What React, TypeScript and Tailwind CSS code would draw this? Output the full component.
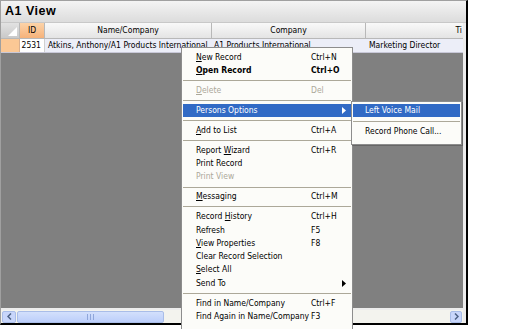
import React from "react";

type Item =
  | { sep: true }
  | { label: string; u?: number; key?: string; bold?: boolean; off?: boolean; sub?: boolean; hot?: boolean };

const menu: Item[] = [
  { label: "New Record", u: 0, key: "Ctrl+N" },
  { label: "Open Record", u: 0, key: "Ctrl+O", bold: true },
  { sep: true },
  { label: "Delete", u: 0, key: "Del", off: true },
  { sep: true },
  { label: "Persons Options", sub: true, hot: true },
  { sep: true },
  { label: "Add to List", u: 0, key: "Ctrl+A" },
  { sep: true },
  { label: "Report Wizard", u: 7, key: "Ctrl+R" },
  { label: "Print Record" },
  { label: "Print View", off: true },
  { sep: true },
  { label: "Messaging", u: 0, key: "Ctrl+M" },
  { sep: true },
  { label: "Record History", u: 7, key: "Ctrl+H" },
  { label: "Refresh", key: "F5" },
  { label: "View Properties", u: 0, key: "F8" },
  { label: "Clear Record Selection" },
  { label: "Select All", u: 0 },
  { label: "Send To", sub: true },
  { sep: true },
  { label: "Find in Name/Company", key: "Ctrl+F" },
  { label: "Find Again in Name/Company", key: "F3" },
];

const font = { fontFamily: "'DejaVu Sans Condensed', 'Liberation Sans', sans-serif" };

function Label({ text, u }: { text: string; u?: number }) {
  if (u === undefined) return <>{text}</>;
  return (
    <>
      {text.slice(0, u)}
      <span className="underline underline-offset-1">{text[u]}</span>
      {text.slice(u + 1)}
    </>
  );
}

function Arrow({ white }: { white?: boolean }) {
  return (
    <svg width="4" height="7" viewBox="0 0 4 7" className="absolute right-[5px] top-[3px]">
      <path d="M0 0 L4 3.5 L0 7 Z" fill={white ? "#fff" : "#000"} />
    </svg>
  );
}

function Menu() {
  return (
    <div
      className="absolute left-[181px] top-[47px] w-[172px] bg-[#fcfcf9] border border-[#8d8d8d] text-[8.5px] text-black pt-[3px] pb-[10px]"
      style={font}
    >
      {menu.map((m, i) =>
        "sep" in m ? (
          <div key={i} className="h-[6.6px] flex items-center px-[1px]">
            <div className="h-px w-full bg-[#aca899]" />
          </div>
        ) : (
          <div
            key={i}
            className={`relative h-[13.3px] leading-[13.3px] mx-[1px] flex ${
              m.hot ? "bg-[#316ac5] text-white" : m.off ? "text-[#aca899]" : ""
            } ${m.bold ? "font-bold" : ""}`}
          >
            <span className="pl-[13px] w-[128px] whitespace-nowrap">
              <Label text={m.label} u={m.u} />
            </span>
            {m.key && <span className="whitespace-nowrap">{m.key}</span>}
            {m.sub && <Arrow white={m.hot} />}
          </div>
        )
      )}
    </div>
  );
}

function SubMenu() {
  return (
    <div
      className="absolute left-[351px] top-[101px] w-[111px] bg-[#fcfcf9] border border-[#8d8d8d] text-[8.5px] pt-[1px] pb-[5px] shadow-[1px_1px_0_rgba(0,0,0,0.2)]"
      style={font}
    >
      <div className="h-[13.3px] leading-[13.3px] mx-[1px] mt-[1px] bg-[#316ac5] text-white pl-[12px]">Left Voice Mail</div>
      <div className="h-[8px] flex items-center px-[1px]">
        <div className="h-px w-full bg-[#aca899]" />
      </div>
      <div className="h-[13.3px] leading-[13.3px] pl-[13px] whitespace-nowrap">Record Phone Call...</div>
    </div>
  );
}

function Head({ w, children, orange }: { w: string; children?: React.ReactNode; orange?: boolean }) {
  return (
    <div
      className={`${w} shrink-0 h-full flex items-center justify-center border-r border-[#b8b8b8] overflow-hidden whitespace-nowrap ${
        orange ? "bg-gradient-to-b from-[#fcd3a8] to-[#f6b27a]" : "bg-gradient-to-b from-[#f9f9f9] to-[#e4e4e4]"
      }`}
    >
      {children}
    </div>
  );
}

export default function App() {
  return (
    <div className="relative w-[529px] h-[329px] bg-white overflow-hidden">
      <div className="w-[468px] h-[325px] flex flex-col border-l border-t border-[#a0a0a0] border-r-2 border-b-2 border-r-black border-b-black">
        <div className="h-[22px] shrink-0 bg-gradient-to-b from-[#f4f4f4] to-[#dcdcdc] border-b border-[#c8c8c8] px-[4px] flex items-center">
          <span className="text-[12.5px] font-bold text-black tracking-[0.5px]" style={{ fontFamily: "'Liberation Sans', sans-serif" }}>
            A1 View
          </span>
        </div>
        <div className="flex-1 flex flex-col bg-[#808080] border-r-[3px] border-[#ececec] text-[8.5px] text-black" style={font}>
          <div className="h-[16px] flex border-b border-[#b8b8b8] shrink-0">
            <div className="w-[19px] shrink-0 h-full bg-gradient-to-b from-[#e2e2e2] to-[#c9c9c9] border-r border-[#b8b8b8] flex items-end justify-end p-[2px]">
              <svg width="9" height="9" viewBox="0 0 9 9">
                <path d="M9 0 L9 9 L0 9 Z" fill="#fff" />
              </svg>
            </div>
            <Head w="w-[25px]" orange>ID</Head>
            <Head w="w-[167px]">Name/Company</Head>
            <Head w="w-[154px]">Company</Head>
            <div className="flex-1 h-full bg-gradient-to-b from-[#f9f9f9] to-[#e4e4e4] flex items-center justify-end pr-[1px] overflow-hidden whitespace-nowrap">
              Ti
            </div>
          </div>
          <div className="h-[14px] flex shrink-0 bg-[#eceef8] border-b border-[#c8c8d8]">
            <div className="w-[19px] shrink-0 bg-[#fbc895] border-r border-[#d8b090]" />
            <div className="w-[25px] shrink-0 bg-white flex items-center justify-end pr-[3px] border-r border-[#d0d0d0]">2531</div>
            <div className="w-[167px] shrink-0 flex items-center pl-[3px] whitespace-nowrap overflow-hidden">
              Atkins, Anthony/A1 Products International
            </div>
            <div className="w-[154px] shrink-0 flex items-center pl-[2px] whitespace-nowrap">A1 Products International</div>
            <div className="flex-1 flex items-center pl-[3px] whitespace-nowrap overflow-hidden">Marketing Director</div>
          </div>
          <div className="flex-1" />
          <div className="h-[2px] bg-[#ececec] shrink-0" />
          <div className="h-[13px] shrink-0 bg-[#f3f3ee] flex items-center px-[1px] gap-[1px]">
            <div className="w-[14px] h-[12px] rounded-[2px] bg-[#c8d6fb] border border-[#a9bde8] flex items-center justify-center">
              <svg width="5" height="7" viewBox="0 0 5 7">
                <path d="M4 0.5 L1 3.5 L4 6.5" stroke="#4d6185" strokeWidth="1.5" fill="none" />
              </svg>
            </div>
            <div className="w-[147px] h-[12px] rounded-[2px] bg-gradient-to-b from-[#d3e0fc] to-[#bccefa] border border-[#a9bde8] flex items-center justify-center">
              <svg width="7" height="6" viewBox="0 0 7 6">
                <path d="M0.5 0 V6 M3.5 0 V6 M6.5 0 V6" stroke="#8fa6da" strokeWidth="1" />
              </svg>
            </div>
            <div className="flex-1" />
            <div className="w-[12px] h-[12px] rounded-[2px] bg-[#c8d6fb] border border-[#a9bde8] flex items-center justify-center">
              <svg width="5" height="7" viewBox="0 0 5 7">
                <path d="M1 0.5 L4 3.5 L1 6.5" stroke="#4d6185" strokeWidth="1.5" fill="none" />
              </svg>
            </div>
          </div>
        </div>
      </div>
      <Menu />
      <SubMenu />
    </div>
  );
}
